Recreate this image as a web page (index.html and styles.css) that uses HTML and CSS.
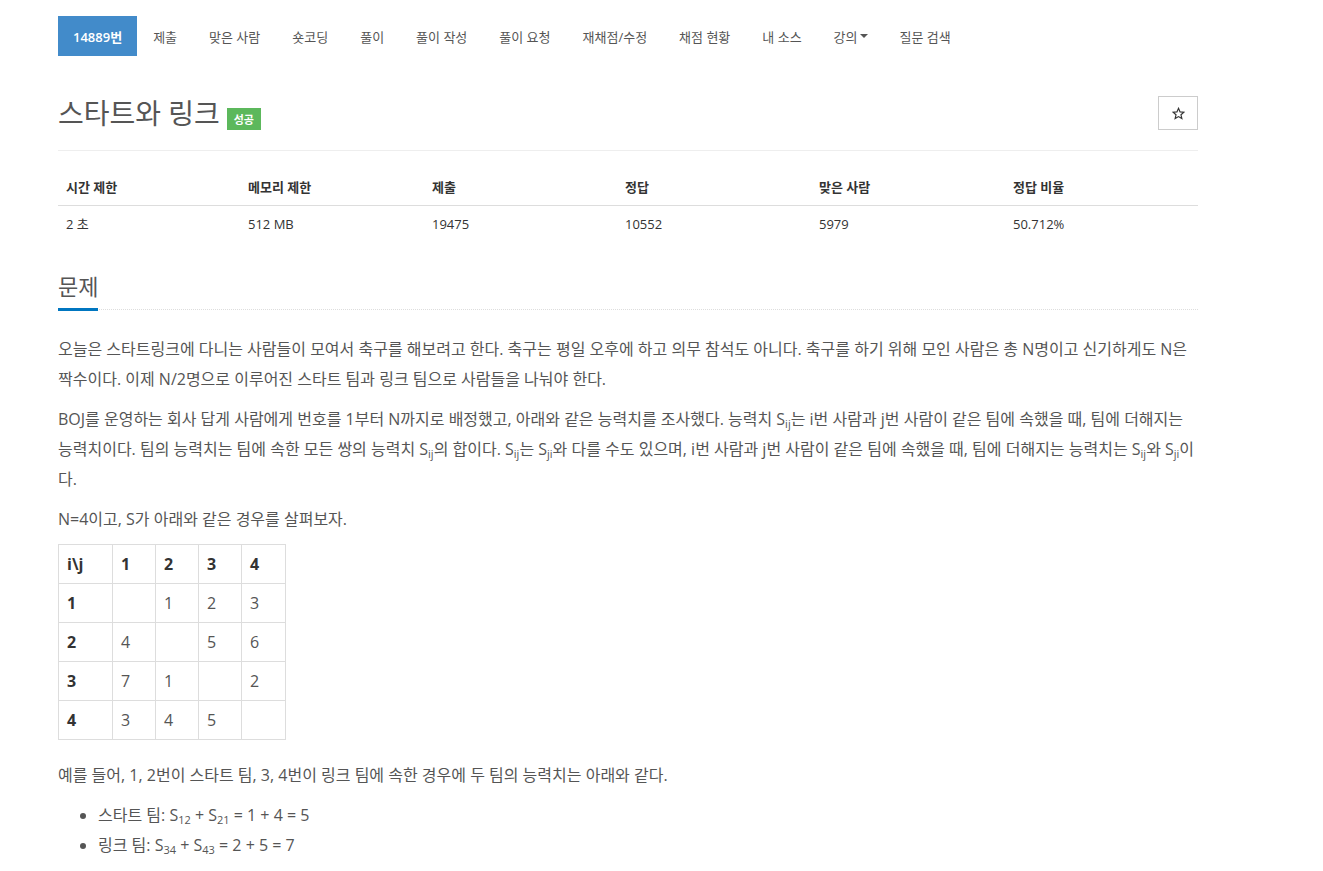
FILE: index.html
```html
<!DOCTYPE html>
<html lang="ko">
<head>
<meta charset="utf-8">
<title>스타트와 링크</title>
<link rel="stylesheet" href="styles.css">
</head>
<body>
<div class="container">
  <ul class="nav">
    <li class="active"><a>14889번</a></li>
    <li><a>제출</a></li>
    <li><a>맞은 사람</a></li>
    <li><a>숏코딩</a></li>
    <li><a>풀이</a></li>
    <li><a>풀이 작성</a></li>
    <li><a>풀이 요청</a></li>
    <li><a>재채점/수정</a></li>
    <li><a>채점 현황</a></li>
    <li><a>내 소스</a></li>
    <li><a>강의<span class="caret"></span></a></li>
    <li><a>질문 검색</a></li>
  </ul>

  <div class="page-header">
    <h1 class="title">스타트와 링크 <span class="label-success">성공</span></h1>
    <button class="star-btn" type="button"><svg width="13" height="13" viewBox="0 0 24 24"><path d="M12 2.5l2.9 6.6 7.1.6-5.4 4.7 1.6 7-6.2-3.7-6.2 3.7 1.6-7L2 9.7l7.1-.6z" fill="none" stroke="#333" stroke-width="2.2" stroke-linejoin="miter"/></svg></button>
  </div>

  <table class="stats">
    <thead>
      <tr><th>시간 제한</th><th>메모리 제한</th><th>제출</th><th>정답</th><th>맞은 사람</th><th>정답 비율</th></tr>
    </thead>
    <tbody>
      <tr><td>2 초</td><td>512 MB</td><td>19475</td><td>10552</td><td>5979</td><td>50.712%</td></tr>
    </tbody>
  </table>

  <section class="problem">
    <div class="headline"><h2><span>문제</span></h2></div>
    <div class="problem-text">
      <p>오늘은 스타트링크에 다니는 사람들이 모여서 축구를 해보려고 한다. 축구는 평일 오후에 하고 의무 참석도 아니다. 축구를 하기 위해 모인 사람은 총 N명이고 신기하게도 N은 짝수이다. 이제 N/2명으로 이루어진 스타트 팀과 링크 팀으로 사람들을 나눠야 한다.</p>
      <p>BOJ를 운영하는 회사 답게 사람에게 번호를 1부터 N까지로 배정했고, 아래와 같은 능력치를 조사했다. 능력치 S<sub>ij</sub>는 i번 사람과 j번 사람이 같은 팀에 속했을 때, 팀에 더해지는 능력치이다. 팀의 능력치는 팀에 속한 모든 쌍의 능력치 S<sub>ij</sub>의 합이다. S<sub>ij</sub>는 S<sub>ji</sub>와 다를 수도 있으며, i번 사람과 j번 사람이 같은 팀에 속했을 때, 팀에 더해지는 능력치는 S<sub>ij</sub>와 S<sub>ji</sub>이다.</p>
      <p>N=4이고, S가 아래와 같은 경우를 살펴보자.</p>
      <table class="matrix">
        <thead>
          <tr><th>i\j</th><th>1</th><th>2</th><th>3</th><th>4</th></tr>
        </thead>
        <tbody>
          <tr><th>1</th><td></td><td>1</td><td>2</td><td>3</td></tr>
          <tr><th>2</th><td>4</td><td></td><td>5</td><td>6</td></tr>
          <tr><th>3</th><td>7</td><td>1</td><td></td><td>2</td></tr>
          <tr><th>4</th><td>3</td><td>4</td><td>5</td><td></td></tr>
        </tbody>
      </table>
      <p>예를 들어, 1, 2번이 스타트 팀, 3, 4번이 링크 팀에 속한 경우에 두 팀의 능력치는 아래와 같다.</p>
      <ul>
        <li>스타트 팀: S<sub>12</sub> + S<sub>21</sub> = 1 + 4 = 5</li>
        <li>링크 팀: S<sub>34</sub> + S<sub>43</sub> = 2 + 5 = 7</li>
      </ul>
    </div>
  </section>
</div>
</body>
</html>
```

FILE: styles.css
```css
* { box-sizing: border-box; }
html, body { margin: 0; padding: 0; background: #fff; }
body {
  font-family: "Open Sans", "Noto Sans CJK KR", sans-serif;
  font-size: 13px;
  color: #333;
}
.container {
  width: 1140px;
  margin-left: 58px;
  padding-top: 16px;
}

/* nav */
.nav {
  list-style: none;
  margin: 0;
  padding: 0;
  display: flex;
  height: 40px;
}
.nav li a {
  display: flex;
  align-items: center;
  height: 40px;
  padding: 0 16px;
  color: #555;
  font-size: 13px;
}
.nav li.active a {
  background: #428bca;
  color: #fff;
  font-weight: 600;
  padding: 0 15px;
}
.caret {
  display: inline-block;
  width: 0;
  height: 0;
  margin-left: 2px;
  border-top: 4px solid #555;
  border-left: 4px solid transparent;
  border-right: 4px solid transparent;
}

/* header */
.page-header {
  margin-top: 40px;
  padding-bottom: 20px;
  border-bottom: 1px solid #eee;
  display: flex;
  justify-content: space-between;
  align-items: flex-start;
}
.title {
  margin: 0;
  font-size: 28px;
  line-height: 33px;
  font-weight: 400;
  color: #555;
  display: flex;
  align-items: center;
}
.label-success {
  display: inline-flex;
  align-items: center;
  justify-content: center;
  width: 34px;
  height: 22px;
  margin-left: 7px;
  margin-top: 12px;
  background: #5cb85c;
  color: #fff;
  font-size: 11px;
  font-weight: 700;
}
.star-btn {
  width: 40px;
  height: 34px;
  background: #fff;
  border: 1px solid #ccc;
  display: flex;
  align-items: center;
  justify-content: center;
  padding: 0;
}

/* stats table */
.stats {
  width: 1140px;
  margin-top: 18px;
  border-collapse: collapse;
  table-layout: fixed;
}
.stats th, .stats td {
  text-align: left;
  padding: 8px;
  line-height: 20px;
  font-size: 13px;
  color: #333;
}
.stats th { font-weight: 700; border-bottom: 1px solid #ddd; }
.stats th:nth-child(1) { width: 182px; }
.stats th:nth-child(2) { width: 184px; }
.stats th:nth-child(3) { width: 193px; }
.stats th:nth-child(4) { width: 194px; }
.stats th:nth-child(5) { width: 194px; }
.stats th:nth-child(6) { width: 193px; }

/* problem */
.problem { margin-top: 24px; }
.headline {
  border-bottom: 1px dotted #ddd;
}
.headline h2 {
  margin: 0;
  font-size: 22px;
  font-weight: 400;
  line-height: 40px;
  color: #555;
}
.headline h2 span {
  display: inline-block;
  border-bottom: 3px solid #0076c0;
  margin-bottom: -2px;
  padding-bottom: 4px;
  line-height: 36px;
}
.problem-text {
  margin-top: 24px;
  font-size: 16px;
  line-height: 30px;
  color: #555;
}
.problem-text p { margin: 0 0 10px; }
sub {
  font-size: 11px;
  line-height: 0;
  vertical-align: -3px;
}
.matrix {
  border-collapse: collapse;
  margin: 0 0 20px;
}
.matrix th, .matrix td {
  border: 1px solid #ddd;
  padding: 8px;
  line-height: 22px;
  text-align: left;
  font-size: 16px;
  color: #333;
}
.matrix td { color: #555; }
.matrix th { font-weight: 700; }
.matrix tr > :nth-child(1) { width: 54px; }
.matrix tr > :nth-child(2) { width: 43px; }
.matrix tr > :nth-child(3) { width: 43px; }
.matrix tr > :nth-child(4) { width: 43px; }
.matrix tr > :nth-child(5) { width: 44px; }
.problem-text ul {
  margin: 0;
  padding-left: 40px;
}
.problem-text li { line-height: 30px; }
```
